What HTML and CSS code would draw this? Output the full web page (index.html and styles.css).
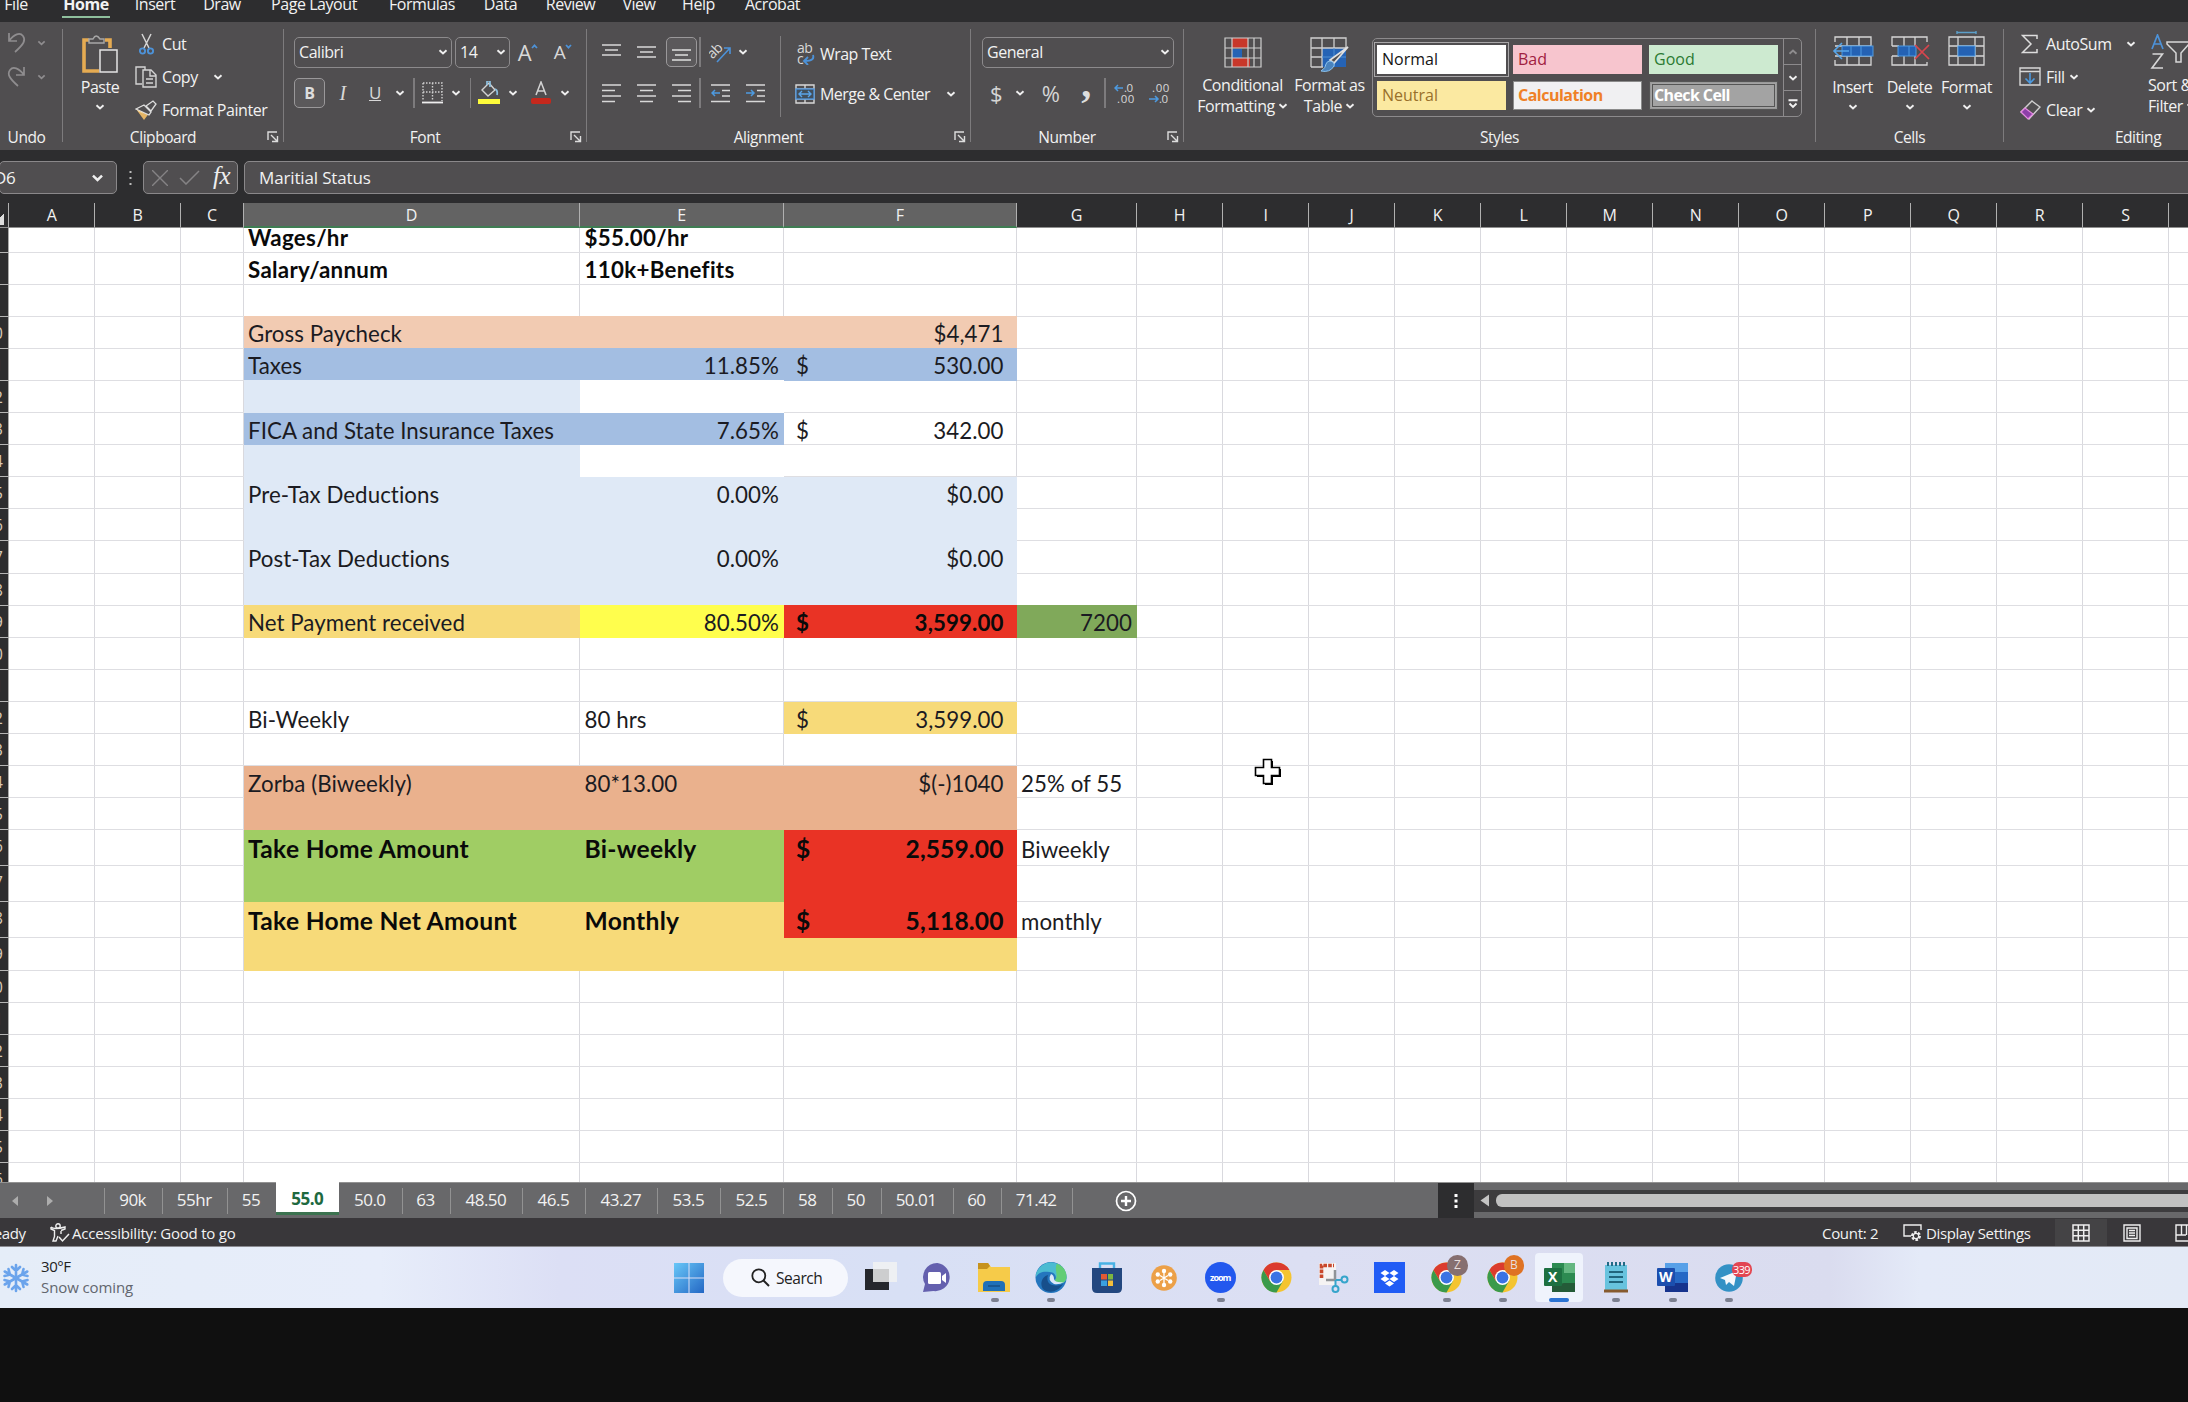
FILE: index.html
```html
<!DOCTYPE html>
<html lang="en">
<head>
<meta charset="utf-8">
<title>Paycheck workbook</title>
<link rel="stylesheet" href="styles.css">
</head>
<body>
<svg class="defs" width="0" height="0">
  <symbol id="chev" viewBox="0 0 10 6"><path d="M1.5 1.2 5 4.5 8.5 1.2" fill="none" stroke="currentColor" stroke-width="1.9"/></symbol>
  <symbol id="launch" viewBox="0 0 12 12"><path d="M1 9V1h9M4 4l6 6M10.5 5v5.5H5" fill="none" stroke="#ddd" stroke-width="1.4"/></symbol>
  <symbol id="chrome" viewBox="0 0 31 31">
    <circle cx="15.500" cy="15.500" r="15" fill="#f4c430"/>
    <path d="M2.500 8A15 15 0 0 0 15.500 30.500L22 19 15.500 15.500 9 19Z" fill="#3a9a4b"/>
    <path d="M15.500 8H28.500A15 15 0 0 0 2.500 8L9 19Z" fill="#db3b2e"/>
    <circle cx="15.500" cy="15.500" r="7.400" fill="#fff"/><circle cx="15.500" cy="15.500" r="5.900" fill="#3b73e4"/>
  </symbol>
</svg>
<main class="screen">
  <nav class="menu">
    <span class="m1">File</span><span class="m2 active">Home</span><span class="m3">Insert</span><span class="m4">Draw</span><span class="m5">Page Layout</span><span class="m6">Formulas</span><span class="m7">Data</span><span class="m8">Review</span><span class="m9">View</span><span class="m10">Help</span><span class="m11">Acrobat</span>
  </nav>

  <section class="ribbon">
    <div class="group g-undo">
      <div class="body undo-body">
        <div class="pair"><svg width="20" height="24" viewBox="0 0 20 24"><path d="M2 2v8h8M2 10C7 3 13 1 16 5s1 8-8 16" fill="none" stroke="#8f8d8f" stroke-width="1.700"/></svg><svg class="chev" width="9" height="6"><use href="#chev"/></svg></div>
        <div class="pair"><svg width="20" height="24" viewBox="0 0 20 24"><path d="M17 2v8H9M17 10C12 3 6 1 3 5s-1 8 8 16" fill="none" stroke="#8f8d8f" stroke-width="1.700"/></svg><svg class="chev" width="9" height="6"><use href="#chev"/></svg></div>
      </div>
      <div class="caption"><span>Undo</span></div>
    </div>
    <div class="group g-clip">
      <div class="body clip-body">
        <div class="big"><svg width="36" height="40" viewBox="0 0 36 40"><path d="M7 6H2v31h15M23 6h5v8" fill="none" stroke="#e5ab52" stroke-width="3.600"/><path d="M7 9V5h4q3-6 7 0h4v4z" fill="#504e50" stroke="#a7a7a7" stroke-width="1.400"/><rect x="18" y="16" width="17" height="22" fill="#504e50" stroke="#e4e4e4" stroke-width="1.500"/></svg><span>Paste</span><svg class="chev" width="10" height="6"><use href="#chev"/></svg></div>
        <div class="list">
          <div><i><svg width="15" height="22" viewBox="0 0 15 22"><path d="M3 1l7 14M12 1 5 15" stroke="#d6d6d6" stroke-width="1.500"/><circle cx="3.500" cy="18" r="2.600" fill="none" stroke="#4d92d8" stroke-width="1.900"/><circle cx="11.500" cy="18" r="2.600" fill="none" stroke="#4d92d8" stroke-width="1.900"/></svg></i>Cut</div>
          <div><i><svg width="22" height="22" viewBox="0 0 22 22"><path d="M7 18H1V1h9v3M8 4h8l5 5v12H8zM15 4v6h6M11 13h7M11 17h7" fill="none" stroke="#d3d3d3" stroke-width="1.400"/></svg></i>Copy<svg class="chev copychev" width="10" height="6"><use href="#chev"/></svg></div>
          <div><i><svg width="22" height="21" viewBox="0 0 22 21"><path d="M1 9l8-4 6 7-6 8z" fill="#e4b465"/><path d="M1 9 9 5l7 7-2 3z" fill="#504e50" stroke="#ddd" stroke-width="1.300"/><path d="M11 6l7-5 3 3-5 7z" fill="#504e50" stroke="#ddd" stroke-width="1.300"/><path d="M3 11l5 2" stroke="#f5d79c"/></svg></i>Format Painter</div>
        </div>
      </div>
      <div class="caption"><span>Clipboard</span><svg width="12" height="12"><use href="#launch"/></svg></div>
    </div>
    <div class="group g-font">
      <div class="body">
        <div class="row1 font1"><div class="combo">Calibri<svg class="chev" width="10" height="6"><use href="#chev"/></svg></div><div class="combo">14<svg class="chev" width="10" height="6"><use href="#chev"/></svg></div><span class="grow">A<svg width="7" height="5" viewBox="0 0 7 5"><path d="M1 4 3.500 1.300 6 4" fill="none" stroke="#4d92d8" stroke-width="1.700"/></svg></span><span class="shrink">A<svg width="7" height="5" viewBox="0 0 7 5"><path d="M1 1l2.500 2.700L6 1" fill="none" stroke="#4d92d8" stroke-width="1.700"/></svg></span></div>
        <div class="row2 font2"><b class="boxed">B</b><em class="serif">I</em><u>U</u><svg class="chev" width="10" height="6"><use href="#chev"/></svg><s></s>
          <svg width="21" height="22" viewBox="0 0 21 22"><path d="M1 1h19v18M1 1v18M10.500 1v18M1 10h19" fill="none" stroke="#d0d0d0" stroke-width="1.400" stroke-dasharray="1.500 1.500"/><path d="M0 20.500h21" stroke="#eee" stroke-width="1.800"/></svg>
          <svg class="chev" width="10" height="6"><use href="#chev"/></svg><s></s>
          <svg width="22" height="24" viewBox="0 0 22 24"><path d="M4 9l7-7 6 7-7 6z" fill="none" stroke="#d3d3d3" stroke-width="1.400"/><path d="M9 4V0h3v6M17 8q3 1 2 6" fill="none" stroke="#8dc0e0" stroke-width="1.700"/><rect x="0" y="18" width="22" height="5" fill="#fdfb3a"/></svg>
          <svg class="chev" width="10" height="6"><use href="#chev"/></svg>
          <svg width="22" height="24" viewBox="0 0 22 24"><path d="M6 14 11 1l5 13M8 10h6" fill="none" stroke="#d3d3d3" stroke-width="1.500"/><rect x="1" y="17" width="20" height="6" rx="2" fill="#c5281c"/></svg>
          <svg class="chev" width="10" height="6"><use href="#chev"/></svg></div>
      </div>
      <div class="caption"><span>Font</span><svg width="12" height="12"><use href="#launch"/></svg></div>
    </div>
    <div class="group g-align">
      <div class="body align-body">
        <div class="left">
          <div class="row1 al1">
            <svg width="19" height="18" viewBox="0 0 19 18"><path d="M0 2h19M3 7h13M0 12h19" stroke="#d8d8d8" stroke-width="1.500"/></svg>
            <svg width="19" height="18" viewBox="0 0 19 18"><path d="M0 4h19M3 9h13M0 14h19" stroke="#d8d8d8" stroke-width="1.500"/></svg>
            <b class="boxed low"><svg width="19" height="14" viewBox="0 0 19 14"><path d="M0 2h19M3 7h13M0 12h19" stroke="#e0e0e0" stroke-width="1.500"/></svg></b><s></s>
            <svg width="22" height="24" viewBox="0 0 22 24"><text x="-3" y="14" font-size="14" fill="#d8d8d8" transform="rotate(-45 7 9)">ab</text><path d="M8 22 21 8M15 8h6v6" fill="none" stroke="#4d92d8" stroke-width="1.600"/></svg>
            <svg class="chev start" width="10" height="6"><use href="#chev"/></svg>
          </div>
          <div class="row2 al2">
            <svg width="19" height="20" viewBox="0 0 19 20"><path d="M0 2h19M0 7.500h13M0 13h19M0 18.500h13" stroke="#d8d8d8" stroke-width="1.500"/></svg>
            <svg width="19" height="20" viewBox="0 0 19 20"><path d="M0 2h19M3 7.500h13M0 13h19M3 18.500h13" stroke="#d8d8d8" stroke-width="1.500"/></svg>
            <svg width="19" height="20" viewBox="0 0 19 20"><path d="M0 2h19M6 7.500h13M0 13h19M6 18.500h13" stroke="#d8d8d8" stroke-width="1.500"/></svg><s></s>
            <svg width="19" height="20" viewBox="0 0 19 20"><path d="M0 2h19M11 7.500h8M11 13h8M0 18.500h19" stroke="#d8d8d8" stroke-width="1.500"/><path d="M9 10H1M4 7l-3 3 3 3" fill="none" stroke="#4d9ae0" stroke-width="1.500"/></svg>
            <svg width="19" height="20" viewBox="0 0 19 20"><path d="M0 2h19M11 7.500h8M11 13h8M0 18.500h19" stroke="#d8d8d8" stroke-width="1.500"/><path d="M0 10h8M5 7l3 3-3 3" fill="none" stroke="#4d9ae0" stroke-width="1.500"/></svg>
          </div>
        </div>
        <div class="right">
          <div class="row1 wrap"><svg width="20" height="22" viewBox="0 0 20 22"><text x="2" y="10" font-size="14" fill="#d8d8d8">ab</text><text x="2" y="21" font-size="14" fill="#d8d8d8">c</text><path d="M18 12q2 6-8 6M13 14l-4 4 4 4" fill="none" stroke="#4d92d8" stroke-width="1.900"/></svg><span>Wrap Text</span></div>
          <div class="row2 wrap"><svg width="20" height="20" viewBox="0 0 20 20"><path d="M1 1h18v18H1zM1 5h18M1 15h18M10 1v4M10 15v4" fill="none" stroke="#d8d8d8" stroke-width="1.400"/><rect x="1" y="5" width="18" height="10" fill="#424f5c" stroke="#4d92d8" stroke-width="1.400"/><path d="M4 10h12M7 7l-3 3 3 3M13 7l3 3-3 3" fill="none" stroke="#5aa5ea" stroke-width="1.400"/></svg><span>Merge &amp; Center</span><svg class="chev" width="10" height="6"><use href="#chev"/></svg></div>
        </div>
      </div>
      <div class="caption"><span>Alignment</span><svg width="12" height="12"><use href="#launch"/></svg></div>
    </div>
    <div class="group g-num">
      <div class="body">
        <div class="row1 num1"><div class="combo">General<svg class="chev" width="10" height="6"><use href="#chev"/></svg></div></div>
        <div class="row2 num2"><span class="sym">$</span><svg class="chev" width="10" height="6"><use href="#chev"/></svg><span class="sym">%</span><span class="comma">,</span><s></s>
          <svg width="21" height="22" viewBox="0 0 21 22"><text x="10" y="9.500" font-size="11.500" fill="#d8d8d8">.0</text><text x="3" y="21" font-size="11.500" fill="#d8d8d8" textLength="17">.00</text><path d="M9 6H1M4 3 1 6l3 3" fill="none" stroke="#4d9ae0" stroke-width="1.500"/></svg>
          <svg width="21" height="22" viewBox="0 0 21 22"><text x="3" y="9.500" font-size="11.500" fill="#d8d8d8" textLength="17">.00</text><text x="10" y="21" font-size="11.500" fill="#d8d8d8">.0</text><path d="M0 17h9M6 14l3 3-3 3" fill="none" stroke="#4d9ae0" stroke-width="1.500"/></svg></div>
      </div>
      <div class="caption"><span>Number</span><svg width="12" height="12"><use href="#launch"/></svg></div>
    </div>
    <div class="group g-styles">
      <div class="body styles-body">
        <div class="big two"><svg width="38" height="36" viewBox="0 0 38 36"><rect x="8" y="1" width="16" height="10" fill="#c8372a"/><rect x="8" y="12" width="10" height="9" fill="#2563b5"/><rect x="8" y="21" width="18" height="9" fill="#c8372a"/><path d="M1 1h36v29H1zM8 1v29M24 1v29M30 1v29M1 11h36M1 21h36" fill="none" stroke="#cfcfcf" stroke-width="1.200"/></svg><span>Conditional</span><span>Formatting <svg class="chev" width="10" height="6"><use href="#chev"/></svg></span></div>
        <div class="big two"><svg width="40" height="36" viewBox="0 0 40 36"><rect x="12" y="11" width="24" height="19" fill="#2563b5"/><path d="M1 30V1h35v10M1 30h12M12 1v29M24 1v10M1 11h35M1 20h11" fill="none" stroke="#cfcfcf" stroke-width="1.300"/><path d="M24 11v19M12 20h24" stroke="#4f8fd2"/><path d="M38 10 24 26l-4-3z" fill="#504e50" stroke="#e0e0e0" stroke-width="1.700"/><path d="M20 24q5 1 4 5-4 7-13 5 5-3 5-7 1-3 4-3z" fill="#4a83bd" stroke="#8cc3ee"/></svg><span>Format as</span><span>Table <svg class="chev" width="10" height="6"><use href="#chev"/></svg></span></div>
        <div class="gallery">
          <div class="swatches">
            <span class="sw normal">Normal</span><span class="sw bad">Bad</span><span class="sw good">Good</span>
            <span class="sw neutral">Neutral</span><span class="sw calc">Calculation</span><span class="sw check">Check Cell</span>
          </div>
          <div class="spin"><span><svg width="10" height="6" viewBox="0 0 10 6"><path d="M1.500 4.800 5 1.500l3.500 3.300" fill="none" stroke="#8e8c8e" stroke-width="1.900"/></svg></span><span><svg class="chev" width="10" height="6"><use href="#chev"/></svg></span><span><svg width="10" height="10" viewBox="0 0 10 10"><path d="M.5 1.200h9M1.500 4.500 5 8l3.500-3.500" fill="none" stroke="#f2f2f2" stroke-width="1.900"/></svg></span></div>
        </div>
      </div>
      <div class="caption"><span>Styles</span></div>
    </div>
    <div class="group g-cells">
      <div class="body cells-body">
        <div class="big"><svg width="42" height="36" viewBox="0 0 42 36"><path d="M3 11V6h36v28H3v-5M15 6v28M27 6v28M3 15h36M3 25h36" fill="none" stroke="#d6d6d6" stroke-width="1.300"/><rect x="10" y="15" width="31" height="10" fill="#2462b4" stroke="#4f9ae0"/><path d="M19 15v10M29 15v10" stroke="#4f9ae0"/><path d="M17 20H2M10 12l-8 8 8 8" fill="none" stroke="#57a5e8" stroke-width="1.600"/></svg><span>Insert</span><svg class="chev" width="10" height="6"><use href="#chev"/></svg></div>
        <div class="big"><svg width="40" height="36" viewBox="0 0 40 36"><path d="M2 15V6h35v5M2 25v9h35v-3M14 6v9M25 6v9M14 25v9M25 25v9M2 15h7M2 25h7" fill="none" stroke="#d6d6d6" stroke-width="1.300"/><rect x="8" y="15" width="18" height="10" fill="#2462b4" stroke="#4f9ae0"/><path d="M19 15v10" stroke="#4f9ae0"/><path d="M25 14l14 14M39 14 25 28" stroke="#d9454d" stroke-width="1.700"/></svg><span>Delete</span><svg class="chev" width="10" height="6"><use href="#chev"/></svg></div>
        <div class="big"><svg width="38" height="36" viewBox="0 0 38 36"><path d="M1 6h35v28H1zM10 6v28M27 6v28M1 15h35M1 25h35" fill="none" stroke="#d6d6d6" stroke-width="1.300"/><rect x="10" y="15" width="17" height="10" fill="#2462b4" stroke="#4f9ae0"/><path d="M9 1.500h19M9 0v3M28 0v3" stroke="#5c9fc9" stroke-width="1.400"/></svg><span>Format</span><svg class="chev" width="10" height="6"><use href="#chev"/></svg></div>
      </div>
      <div class="caption"><span>Cells</span></div>
    </div>
    <div class="group g-edit">
      <div class="body edit-body">
        <div class="list">
          <div><i><svg width="18" height="20" viewBox="0 0 18 20"><path d="M16 5V1.500H1.500L10 10l-8.500 8.500H16V15" fill="none" stroke="#ddd" stroke-width="1.500"/></svg></i>AutoSum<svg class="chev sumchev" width="10" height="6"><use href="#chev"/></svg></div>
          <div><i><svg width="22" height="19" viewBox="0 0 22 19"><path d="M1 1h20v17H1zM1 4.500h20" fill="none" stroke="#d8d8d8" stroke-width="1.400"/><path d="M11 6v10M6.500 11.500 11 16l4.500-4.500" fill="none" stroke="#4d9ae0" stroke-width="1.600"/></svg></i>Fill<svg class="chev fillchev" width="10" height="6"><use href="#chev"/></svg></div>
          <div><i><svg width="21" height="20" viewBox="0 0 21 20"><path d="M1 12 12 1l8 6L9 19z" fill="none" stroke="#cfcfcf" stroke-width="1.400"/><path d="M1 12l4-4 8 6-5 5z" fill="#8d3fa8" stroke="#e58ae0" stroke-width="1.200"/></svg></i>Clear<svg class="chev fillchev" width="10" height="6"><use href="#chev"/></svg></div>
        </div>
        <div class="big two sort"><svg width="44" height="36" viewBox="0 0 44 36"><path d="M4 15 9.500 1 15 15M6 10h7" fill="none" stroke="#4d92d8" stroke-width="1.700"/><path d="M4.500 20h10L4 34h11" fill="none" stroke="#d8d8d8" stroke-width="1.600"/><path d="M19 8h22v2l-8 9v9h-5v-9l-9-9z" fill="none" stroke="#d8d8d8" stroke-width="1.500"/></svg><span>Sort &amp;</span><span>Filter <svg class="chev" width="10" height="6"><use href="#chev"/></svg></span></div>
      </div>
      <div class="caption"><span>Editing</span></div>
    </div>
  </section>

  <section class="formula">
    <div class="name">D6<svg class="chev" width="13" height="8"><use href="#chev"/></svg></div>
    <svg class="dots" width="3" height="16" viewBox="0 0 3 16"><path d="M1.500 1v14" stroke="#bbb" stroke-width="2" stroke-dasharray="2 4"/></svg>
    <div class="fx"><svg width="16" height="16" viewBox="0 0 16 16"><path d="M0 0l16 16M16 0 0 16" stroke="#858385" stroke-width="1.400"/></svg><svg width="21" height="15" viewBox="0 0 21 15"><path d="M1 8l6 6L20 1" fill="none" stroke="#858385" stroke-width="1.500"/></svg><em>fx</em></div>
    <div class="input">Maritial Status</div>
  </section>

  <section class="heads cols">
    <span class="corner"></span><span>A</span><span>B</span><span>C</span><span class="sel">D</span><span class="sel">E</span><span class="sel">F</span><span>G</span><span>H</span><span>I</span><span>J</span><span>K</span><span>L</span><span>M</span><span>N</span><span>O</span><span>P</span><span>Q</span><span>R</span><span>S</span><span></span>
  </section>

  <section class="sheet">
    <div class="r cols first"><i></i><b class="d">Wages/hr</b><b class="e">$55.00/hr</b></div>
    <div class="r cols"><i></i><b class="d">Salary/annum</b><b class="e">110k+Benefits</b></div>
    <div class="r cols"><i></i></div>
    <div class="r cols"><i>10</i><span class="d peach">Gross Paycheck</span><span class="e peach"></span><span class="f peach">$4,471</span></div>
    <div class="r cols"><i>11</i><span class="d blue">Taxes</span><span class="e num blue">11.85%</span><span class="f blue"><q>$</q>530.00</span></div>
    <div class="r cols"><i>12</i><span class="d pale"></span><span class="e white"></span></div>
    <div class="r cols"><i>13</i><span class="d blue">FICA and State Insurance Taxes</span><span class="e num blue">7.65%</span><span class="f"><q>$</q>342.00</span></div>
    <div class="r cols"><i>14</i><span class="d pale"></span><span class="e white"></span></div>
    <div class="r cols"><i>15</i><span class="d pale">Pre-Tax Deductions</span><span class="e num pale">0.00%</span><span class="f pale">$0.00</span></div>
    <div class="r cols"><i>16</i><span class="d pale"></span><span class="e pale"></span><span class="f pale"></span></div>
    <div class="r cols"><i>17</i><span class="d pale">Post-Tax Deductions</span><span class="e num pale">0.00%</span><span class="f pale">$0.00</span></div>
    <div class="r cols"><i>18</i><span class="d pale"></span><span class="e pale"></span><span class="f pale"></span></div>
    <div class="r cols"><i>19</i><span class="d gold">Net Payment received</span><span class="e num yellow">80.50%</span><b class="f red"><q>$</q>3,599.00</b><span class="g num olive">7200</span></div>
    <div class="r cols"><i>20</i></div>
    <div class="r cols"><i>21</i></div>
    <div class="r cols"><i>22</i><span class="d">Bi-Weekly</span><span class="e">80 hrs</span><span class="f gold"><q>$</q>3,599.00</span></div>
    <div class="r cols"><i>23</i></div>
    <div class="r cols"><i>24</i><span class="d salmon">Zorba (Biweekly)</span><span class="e salmon">80*13.00</span><span class="f salmon">$(-)1040</span><span class="g">25% of 55</span></div>
    <div class="r cols"><i>25</i><span class="d salmon"></span><span class="e salmon"></span><span class="f salmon"></span></div>
    <div class="r cols tall"><i>26</i><b class="d green">Take Home Amount</b><b class="e green">Bi-weekly</b><b class="f red"><q>$</q>2,559.00</b><span class="g">Biweekly</span></div>
    <div class="r cols tall"><i>27</i><span class="d green"></span><span class="e green"></span><span class="f red"></span></div>
    <div class="r cols tall"><i>28</i><b class="d gold">Take Home Net Amount</b><b class="e gold">Monthly</b><b class="f red"><q>$</q>5,118.00</b><span class="g">monthly</span></div>
    <div class="r cols"><i>29</i><span class="d gold"></span><span class="e gold"></span><span class="f gold"></span></div>
    <div class="r cols"><i>30</i></div>
    <div class="r cols"><i>31</i></div>
    <div class="r cols"><i>32</i></div>
    <div class="r cols"><i>33</i></div>
    <div class="r cols"><i>34</i></div>
    <div class="r cols"><i>35</i></div>
    <div class="r cols"><i>36</i></div>
    <svg class="cursor" width="30" height="30" viewBox="0 0 30 30"><path d="M12 3h8v8h8v8h-8v8h-8v-8H4v-8h8z" fill="#000"/><path d="M10.500 1.500h8v8h8v8h-8v8h-8v-8h-8v-8h8z" fill="#fff" stroke="#000" stroke-width="1.600"/></svg>
  </section>

  <section class="tabs">
    <div class="arrows"><svg width="6" height="10" viewBox="0 0 6 10"><path d="M6 0v10L0 5z" fill="#adadad"/></svg><svg width="6" height="10" viewBox="0 0 6 10"><path d="M0 0v10l6-5z" fill="#adadad"/></svg></div>
    <span class="t58">90k</span><span class="t65">55hr</span><span class="t48">55</span><span class="t63 on">55.0</span><span class="t63">50.0</span><span class="t48">63</span><span class="t72">48.50</span><span class="t63">46.5</span><span class="t72">43.27</span><span class="t63">53.5</span><span class="t63">52.5</span><span class="t48">58</span><span class="t48">50</span><span class="t72">50.01</span><span class="t48">60</span><span class="t72 last">71.42</span>
    <svg class="plus" width="22" height="22" viewBox="0 0 22 22"><circle cx="11" cy="11" r="9.500" fill="none" stroke="#fff" stroke-width="1.700"/><path d="M11 6v10M6 11h10" stroke="#fff" stroke-width="2.400"/></svg>
    <div class="grip"><svg width="4" height="16" viewBox="0 0 4 16"><path d="M2 1v14" stroke="#fff" stroke-width="3" stroke-dasharray="3 2.500"/></svg></div>
    <div class="track"><svg width="10" height="13" viewBox="0 0 10 13"><path d="M9 .5v12L.5 6.500z" fill="#c4c4c4"/></svg><div class="thumb"></div></div>
  </section>

  <section class="status">
    <span class="ready">Ready</span>
    <svg width="20" height="20" viewBox="0 0 20 20"><circle cx="8" cy="3" r="2.200" fill="none" stroke="#eee" stroke-width="1.400"/><path d="M1 4q3 3 14 0v2l-4 1.500M1 4v2l3.500 1.500v6L3 18h3l2-5M11 8v3" fill="none" stroke="#eee" stroke-width="1.400"/><path d="M9 14l3.500 4L19 11" fill="none" stroke="#eee" stroke-width="1.500"/></svg>
    <span class="acc">Accessibility: Good to go</span>
    <span class="count">Count: 2</span>
    <svg class="disp" width="20" height="18" viewBox="0 0 20 18"><path d="M8 12H1V1h17v5" fill="none" stroke="#eee" stroke-width="1.400"/><circle cx="13" cy="12" r="3.700" fill="none" stroke="#eee" stroke-width="2.600" stroke-dasharray="2.400 1.400"/><circle cx="13" cy="12" r="2.700" fill="none" stroke="#eee" stroke-width="1.200"/></svg>
    <span class="set">Display Settings</span>
    <div class="views"><div class="hot"><svg width="18" height="18" viewBox="0 0 18 18"><path d="M1 1h16v16H1zM6.300 1v16M11.700 1v16M1 6.300h16M1 11.700h16" fill="none" stroke="#eee" stroke-width="1.500"/></svg></div><div><svg width="18" height="18" viewBox="0 0 18 18"><path d="M1 1h16v16H1zM4 4h10v10.500H4zM6 6.500h6M6 9h6M6 11.500h6" fill="none" stroke="#eee" stroke-width="1.400"/></svg></div><div><svg width="18" height="18" viewBox="0 0 18 18"><path d="M1 1h16v16H1zM6.500 1v10M11.500 1v10M1 11h10" fill="none" stroke="#eee" stroke-width="1.400"/></svg></div></div>
  </section>

  <section class="taskbar">
    <svg class="snow" width="30" height="30" viewBox="0 0 30 30"><g fill="none" stroke="#6ba4ec" stroke-width="2.600" stroke-linecap="round"><path id="arm" d="M15 15V2M11 4l4 4 4-4"/><use href="#arm" transform="rotate(60 15 15)"/><use href="#arm" transform="rotate(120 15 15)"/><use href="#arm" transform="rotate(180 15 15)"/><use href="#arm" transform="rotate(240 15 15)"/><use href="#arm" transform="rotate(300 15 15)"/></g></svg>
    <div class="weather"><span>30°F</span><small>Snow coming</small></div>
    <svg class="win" width="30" height="30" viewBox="0 0 30 30"><defs><linearGradient id="wg" x2="1" y2="1"><stop stop-color="#68c7f8"/><stop offset="1" stop-color="#2467c4"/></linearGradient></defs><path d="M0 0h14.500v14.500H0zM15.500 0H30v14.500H15.500zM0 15.500h14.500V30H0zM15.500 15.500H30V30H15.500z" fill="url(#wg)"/></svg>
    <div class="search"><svg width="19" height="19" viewBox="0 0 19 19"><circle cx="7.800" cy="7.800" r="6.500" fill="none" stroke="#222" stroke-width="1.800"/><path d="M12.500 12.500 18 18" stroke="#222" stroke-width="2"/></svg><span>Search</span></div>
    <div class="apps">
      <div><svg width="32" height="31" viewBox="0 0 32 31"><path d="M0 7h24v21H0z" fill="#25272c"/><path d="M8 0h24v20H8z" fill="#f3f3f3" opacity=".82"/></svg></div>
      <div><svg width="31" height="31" viewBox="0 0 31 31"><path d="M15.500 1a14 14 0 1 1-4 28L1 30l2-8A14 14 0 0 1 15.500 1z" fill="#6460ae"/><rect x="6" y="10" width="13" height="12" rx="1.500" fill="#fff"/><path d="m20 14 4-3v10l-4-3z" fill="#fff"/></svg></div>
      <div class="run"><svg width="32" height="31" viewBox="0 0 32 31"><path d="M0 1h10l3 4h19v25H0z" fill="#f6cb49"/><path d="M0 1h10l2 3-3 3H0z" fill="#c6921d"/><path d="M5 29v-6q0-4 4-4h14q4 0 4 4v6z" fill="#1f70b8"/><path d="M10 24h12" stroke="#174f86" stroke-width="1.500"/></svg></div>
      <div class="run"><svg width="32" height="31" viewBox="0 0 32 31"><circle cx="16" cy="15.500" r="15.500" fill="#2476be"/><path d="M1 12A15.500 15.500 0 0 1 31.500 15c0 7-9 8-12 4 3-3 1-9-5-9-6-1-11 0-13.500 5z" fill="#4bbbd1"/><path d="M22 1.500c7 3 9.500 8 9.500 13.500 0 7-9 8-12 4 5-6-1-11 2.500-17.500z" fill="#63cd76"/><path d="M13 13c-3 9 5 13 15 9-5 8-14 10-20 5-4-6 0-13 5-14z" fill="#174f8b"/><path d="M16 12q-4 6 3 10 5 1 10-2-9 1-10-3 0-4-3-5z" fill="#dce7fa"/></svg></div>
      <div><svg width="30" height="31" viewBox="0 0 30 31"><path d="M8 7V1.500h14V7" fill="none" stroke="#48b2e5" stroke-width="2.400"/><path d="M0 6h30v20q0 5-5 5H5q-5 0-5-5z" fill="#23477f"/><path d="M9 12h6v5.500H9z" fill="#e35a35"/><path d="M16 12h5v5.500h-5z" fill="#7cb641"/><path d="M9 18.500h6V24H9z" fill="#3aa0df"/><path d="M16 18.500h5V24h-5z" fill="#f3bd3b"/></svg></div>
      <div><svg width="26" height="26" viewBox="0 0 26 26"><circle cx="13" cy="13" r="12.800" fill="#eca048"/><g fill="#fff"><circle cx="13" cy="6" r="2.200"/><circle cx="13" cy="20" r="2.200"/><circle cx="6.800" cy="9.500" r="2.200"/><circle cx="19.200" cy="9.500" r="2.200"/><circle cx="6.800" cy="16.500" r="2.200"/><circle cx="19.200" cy="16.500" r="2.200"/></g><path d="M13 8v10M9 10.500l8 5M17 10.500l-8 5" stroke="#fff" stroke-width="1.300"/></svg></div>
      <div class="run"><svg width="31" height="31" viewBox="0 0 31 31"><circle cx="15.500" cy="15.500" r="15.500" fill="#2258ee"/><text x="5" y="18.500" font-size="9" font-weight="700" fill="#fff" textLength="21">zoom</text></svg></div>
      <div><svg width="31" height="31"><use href="#chrome"/></svg></div>
      <div><svg width="31" height="31" viewBox="0 0 31 31"><path d="M1 1h17v22H1z" fill="#f5f3f3"/><path d="M3.500 16V3.500H16" fill="none" stroke="#c9472b" stroke-width="3.600" stroke-dasharray="3.600 1.200"/><path d="M17 8v11M8 18h10" fill="none" stroke="#909397" stroke-width="2.500"/><circle cx="26.500" cy="17.500" r="3" fill="none" stroke="#36a5cb" stroke-width="2"/><circle cx="17.500" cy="27" r="3" fill="none" stroke="#36a5cb" stroke-width="2"/><path d="M18 18h6M17.500 18v6" stroke="#36a5cb" stroke-width="2"/></svg></div>
      <div><svg width="31" height="31" viewBox="0 0 31 31"><path d="M0 0h31v31H0z" fill="#215cf5"/><path d="m11 8 4.500 3-4.500 3-4.500-3zM20 8l4.500 3-4.500 3-4.500-3zM11 14l4.500 3-4.500 3-4.500-3zM20 14l4.500 3-4.500 3-4.500-3zM15.500 18.500l4.500 3-4.500 3-4.500-3z" fill="#fff"/></svg></div>
      <div class="run"><svg width="31" height="31"><use href="#chrome"/></svg><em class="badge z">Z</em></div>
      <div class="run"><svg width="31" height="31"><use href="#chrome"/></svg><em class="badge b">B</em></div>
      <div class="run current"><svg width="31" height="29" viewBox="0 0 31 29"><path d="M8 0h23v29H8z" fill="#2c8a51"/><path d="M20 0h11v10H20z" fill="#64b781"/><path d="M20 20h11v9H8v-6z" fill="#245b38"/><rect y="5" width="18" height="18" rx="1" fill="#1d7041"/><text x="4" y="19" font-size="14" font-weight="700" fill="#fff">X</text></svg></div>
      <div class="run"><svg width="24" height="31" viewBox="0 0 24 31"><path d="M1 3h22v25H1z" fill="#68c3de"/><path d="M4 0v4M8 0v4M12 0v4M16 0v4M20 0v4" stroke="#226b86" stroke-width="2"/><path d="M5 10h14M5 15h14M5 20h14" stroke="#20657d" stroke-width="1.800"/><path d="M0 29h24" stroke="#875a2e" stroke-width="3"/></svg></div>
      <div class="run"><svg width="31" height="29" viewBox="0 0 31 29"><path d="M8 0h23v29H8z" fill="#2668c5"/><path d="M8 0h23v9H8z" fill="#57a0e8"/><path d="M8 20h23v9H8z" fill="#16338d"/><rect y="5" width="18" height="18" rx="1" fill="#1b4eae"/><text x="2" y="19" font-size="14" font-weight="700" fill="#fff">W</text></svg></div>
      <div class="run"><svg width="28" height="28" viewBox="0 0 28 28"><circle cx="14" cy="14" r="13.800" fill="#3391c5"/><path d="m5 14 17-7-3 15-5-4-3 3-1-5z" fill="#f4f8fc"/></svg><em class="badge t">339</em></div>
    </div>
  </section>
</main>
</body>
</html>
```
FILE: styles.css
```css
* { box-sizing: border-box; }
body { margin: 0; background: #101010; }
.defs { position: absolute; }
svg { display: block; flex: none; }
.screen {
  width: 2188px; height: 1402px; overflow: hidden; display: flex; flex-direction: column;
  background: #101010; color: #f2f2f2;
  font: 16px/20px "Open Sans", "Noto Sans", sans-serif; letter-spacing: -.45px;
}
.screen > * { flex: none; }
.chev { color: #efefef; }

/* menu tabs, cut by the top edge */
.menu { height: 22px; background: #2d2d2f; display: flex; align-items: flex-start; }
.menu span { height: 18px; line-height: 22px; display: flex; align-items: flex-end; justify-content: center; white-space: nowrap; padding-bottom: 3.500px; }
.menu .m1 { margin-left: 3px; width: 26px; }
.menu .m2 { margin-left: 33px; width: 48px; }
.menu .m3 { margin-left: 24px; width: 42px; }
.menu .m4 { margin-left: 26px; width: 40px; }
.menu .m5 { margin-left: 26px; width: 92px; }
.menu .m6 { margin-left: 28px; width: 68px; }
.menu .m7 { margin-left: 27px; width: 35px; }
.menu .m8 { margin-left: 26px; width: 53px; }
.menu .m9 { margin-left: 24px; width: 36px; }
.menu .m10 { margin-left: 24px; width: 35px; }
.menu .m11 { margin-left: 26px; width: 61px; }
.menu .active { font-weight: 700; border-bottom: 2.500px solid #8fbf9d; padding-bottom: 1.500px; }

/* ribbon */
.ribbon { height: 128px; background: #504e50; display: flex; padding-top: 7px; }
.group { height: 113px; border-right: 1.500px solid #7d7b7d; display: flex; flex-direction: column; flex: none; }
.body { height: 99px; flex: none; }
.caption { height: 20px; margin-top: -1px; display: flex; align-items: center; font-size: 15.500px; text-align: center; }
.caption span { flex: 1; }
.caption svg { margin-right: 4px; margin-left: 4px; }
.g-undo { width: 63px; } .g-clip { width: 221px; } .g-font { width: 303px; } .g-align { width: 384px; }
.g-num { width: 213px; } .g-styles { width: 632px; } .g-cells { width: 188px; } .g-edit { width: 268px; border: 0; }
.g-undo .caption { padding-right: 9px; }
.undo-body { padding: 2px 0 0 7px; display: flex; flex-direction: column; gap: 10px; }
.pair { display: flex; align-items: center; gap: 10px; }
.pair .chev { color: #8f8d8f; }

.big { display: flex; flex-direction: column; align-items: center; white-space: nowrap; }
.big > span { height: 20px; }
.clip-body { display: flex; padding-left: 15px; }
.clip-body .big { width: 44px; padding-top: 5px; }
.clip-body .big > span { margin-top: 3px; }
.big > .chev { margin-top: 7px; }
.list > div { height: 33.300px; display: flex; align-items: center; white-space: nowrap; }
.list i { width: 28px; display: flex; justify-content: center; padding-right: 4px; }
.clip-body .list { margin-left: 12px; margin-top: -2px; }
.copychev { margin-left: 15px; }

.row1 { height: 46px; display: grid; align-items: center; }
.row2 { height: 36px; display: grid; align-items: center; }
.row1 > *, .row2 > * { justify-self: center; }
.combo { height: 31px; width: 100%; border: 1.500px solid #8c8a8c; border-radius: 5px; display: flex; align-items: center; justify-content: space-between; padding: 0 3px 0 4px; }
.boxed { width: 31px; height: 30px; border: 1.500px solid #9a989a; border-radius: 5px; display: flex; align-items: center; justify-content: center; background: #5b595b; }
.row1 s, .row2 s { width: 1.500px; height: 30px; background: #7d7b7d; }
.font1 { grid-template-columns: 158px 3px 55px 36px 34px; margin-left: 10px; }
.font1 > :nth-child(2) { grid-column: 3; }
.grow, .shrink { color: #d8d8d8; font-size: 22px; line-height: 24px; display: flex; }
.shrink { font-size: 19px; }
.grow svg, .shrink svg { margin-top: 4px; }
.font2 { grid-template-columns: 31px 35px 30px 19px 10px 26px 22px 7px 29px 19px 38px 10px; margin-left: 10px; }
.font2 b { color: #ddd; } .serif { font-family: "Liberation Serif", serif; font-size: 20px; color: #d8d8d8; } .font2 u { color: #d8d8d8; font-size: 17px; }
.align-body { display: flex; }
.align-body .left { width: 193px; }
.al1, .al2 { grid-template-columns: 35px 35px 35px 2px 38px 33px; margin-left: 7px; }
.start { justify-self: start !important; margin-left: -1px; }
.low { align-items: flex-end; padding-bottom: 4px; }
.align-body .right { flex: 1; margin-top: 7px; height: 81px; border-left: 1.500px solid #7d7b7d; padding-left: 14px; }
.right .row1 { height: 36px; margin-bottom: 4px; }
.right .wrap { display: flex; align-items: center; gap: 5px; white-space: nowrap; }
.wrap span { letter-spacing: -.55px; }
.wrap .chev { margin-left: 11px; }
.num1 { padding: 0 9px 0 11px; }
.num2 { grid-template-columns: 28px 20px 41px 30px 8px 31px 38px; margin-left: 11px; }
.sym { font-size: 22px; color: #d5d5d5; line-height: 24px; }
.comma { font: 700 40px/20px "Liberation Serif", serif; color: #ddd; margin-top: -18px; }

.styles-body { display: flex; }
.two { padding-top: 8px; }
.two > span { height: 20.500px; display: flex; align-items: center; gap: 3px; }
.two > svg + span { margin-top: 2px; }
.styles-body .two { width: 87px; margin-left: 15px; }
.styles-body .two + .two { margin-left: 0; }
.gallery { margin-top: 9px; width: 430px; height: 79px; border: 1.500px solid #8c8a8c; border-radius: 5px; display: flex; margin-left: -1px; }
.swatches { width: 411px; display: grid; grid-template-columns: 129px 129px 129px; column-gap: 7px; grid-auto-rows: 28.500px; row-gap: 7.500px; padding: 6px 0 0 4px; }
.sw { padding-left: 5px; line-height: 28px; letter-spacing: 0; }
.normal { background: #fff; color: #151515; outline: 1.500px solid #a9a7a9; outline-offset: 2px; }
.bad { background: #f7c5ce; color: #a02040; }
.good { background: #cdead0; color: #2b7a32; }
.neutral { background: #fbe9a1; color: #99702a; }
.calc { background: #f0f0f2; color: #ef8126; font-weight: 700; border: 1px solid #8b8b8b; letter-spacing: -.5px; line-height: 26px; padding-left: 4px; }
.check { background: #a3a3a3; color: #fff; font-weight: 700; border: 4px double #555; outline: 1px solid #999; outline-offset: -2px; padding-left: 1px; line-height: 20px; letter-spacing: -.6px; }
.spin { width: 18px; border-left: 1.500px solid #8c8a8c; display: flex; flex-direction: column; }
.spin span { flex: 1; display: flex; align-items: center; justify-content: center; }
.spin span + span { border-top: 1.500px solid #8c8a8c; }
.cells-body { display: flex; padding: 2px 0 0 8px; }
.cells-body .big { width: 57px; }
.cells-body .big > span { margin-top: 10px; }
.edit-body { display: flex; }
.edit-body .list { width: 134px; padding-left: 12px; margin-top: -2px; }
.edit-body .list i { width: 30px; padding-right: 2px; }
.sumchev { margin-left: 14px; } .fillchev { margin-left: 4px; }
.sort { padding-top: 5px; margin-left: 10px; width: 50px; align-items: flex-start; }
.sort > svg + span { margin-top: 5px; }

/* formula bar */
.formula { height: 53px; background: #2d2d2f; padding-top: 11px; display: flex; font-size: 17px; align-items: flex-start; }
.formula > div { height: 33px; background: #504e50; border: 1.500px solid #8a888a; border-radius: 5px; display: flex; align-items: center; flex: none; }
.formula .name { width: 118px; margin-left: -1px; justify-content: space-between; padding: 0 12px 0 0; text-indent: -6px; }
.dots { margin: 9px 11px 0 12px; }
.formula .fx { width: 95px; padding-left: 8px; gap: 11px; }
.fx em { font: italic 25px/24px "Liberation Serif", serif; margin-left: 2px; color: #eee; margin-top: -4px; }
.formula .input { margin-left: 6px; width: 1960px; padding-left: 14px; letter-spacing: -.15px; }

/* spreadsheet */
.cols { display: grid; grid-template-columns: 9px 86px 86px 62.500px 336.500px 204px 232.500px 120.500px repeat(12, 86px) 30px; }
.heads { height: 25px; background: #2d2d2f; }
.heads span { border-right: 1.500px solid #b0b0b0; border-bottom: 1.500px solid #8f8f8f; display: flex; align-items: center; justify-content: center; font-size: 16px; }
.heads .sel { background: #636363; border-bottom: 2px solid #3f7d53; }
.heads .corner { background: linear-gradient(135deg, #2d2d2f 30%, #ddd 30%) no-repeat 0 9px / 4px 13px; }
.sheet {
  height: 954px; overflow: hidden; position: relative; color: #1b1b22;
  font: 22.300px/26px Lato, "Liberation Sans", sans-serif; letter-spacing: .05px; font-variant-ligatures: none;
  --l: linear-gradient(#d9d9de, #d9d9de);
  background: var(--l) 94px 0/1px 100%, var(--l) 180px 0/1px 100%, var(--l) 243px 0/1px 100%, var(--l) 579px 0/1px 100%, var(--l) 783px 0/1px 100%, var(--l) 1016px 0/1px 100%, repeating-linear-gradient(90deg, #d9d9de 0 1px, transparent 1px 86px) 1136px 0/1100px 100%, #fff;
  background-repeat: no-repeat;
}
.r { height: 32.110px; border-bottom: 1.500px solid #dedee2; }
.r.first { height: 24.500px; }
.r.tall { height: 36px; }
.r > i { grid-column: 1; width: 9px; height: calc(100% + 1px); background: #2d2d2f; border-right: 1px solid #aaa; border-bottom: 1.500px solid #b5b5b5; font: 16px/32px "Open Sans", sans-serif; color: #d8c8b8; direction: rtl; overflow: hidden; padding-right: 5px; white-space: nowrap; }
.r > span, .r > b { height: calc(100% + 1.500px); margin-top: -.5px; padding: 5px 5px 0 4.500px; white-space: nowrap; grid-row: 1; position: relative; }
.r.first > b { padding-top: 0; margin-top: -3px; }
.r b { color: #0a0a0a; font-weight: 700; letter-spacing: .3px; }
.r > b.f { letter-spacing: .1px; }
.r.tall > b { font-size: 24.600px; padding-top: 6px; letter-spacing: .3px; }
.r.tall > b.f { letter-spacing: .1px; }
.r.tall > span { padding-top: 7px; }
.d { grid-column: 5; } .e { grid-column: 6; } .f { grid-column: 7; } .g { grid-column: 8; }
.r > .f { text-align: right; padding-right: 13px; padding-left: 12px; }
.r > .num { text-align: right; }
q { quotes: none; float: left; }
.peach { background: #f2cbb2; } .blue { background: #a3bee2; } .pale { background: #dfe9f6; } .white { background: #fff; }
.gold { background: #f7da79; } .yellow { background: #fffe4d; } .red { background: #e93325; } .olive { background: #80a95a; }
.salmon { background: #eab18d; } .green { background: #a0cd64; }
.cursor { position: absolute; left: 1253px; top: 530px; }

/* worksheet tabs */
.tabs { height: 36px; background: #68686a; border-top: 1.500px solid #929292; display: flex; align-items: center; font-size: 17px; }
.arrows { width: 104px; padding-left: 12px; display: flex; gap: 29px; }
.tabs > span { height: 26px; border-left: 1.500px solid #929292; display: flex; align-items: center; justify-content: center; letter-spacing: -.5px; padding: 0 2px 2px 0; }
.tabs > .on { align-self: flex-start; margin-top: -1px; height: 33px; background: #fff; color: #20693f; font-weight: 700; border-left: 0; border-bottom: 3.500px solid #3c7350; padding: 3px 0 0; }
.tabs .on + span { border-left-color: transparent; }
.tabs > .last { border-right: 1.500px solid #929292; }
.t58 { width: 58.200px; } .t65 { width: 65px; } .t48 { width: 48.600px; } .t63 { width: 63px; } .t72 { width: 72px; }
.tabs .plus { margin-left: 42px; }
.grip { height: 36px; width: 36.500px; background: #2d2d2f; margin-left: auto; display: flex; align-items: center; justify-content: center; }
.track { width: 714px; height: 22px; background: #3d3c3e; display: flex; align-items: center; gap: 6px; padding-left: 6px; }
.thumb { flex: 1; height: 12.500px; background: #c1c1c1; border-radius: 6px 0 0 6px; }

.status { height: 29px; background: #39373a; border-bottom: 1.500px solid #8a8a90; display: flex; align-items: center; font-size: 15px; white-space: nowrap; padding-top: 1px; }
.ready { width: 35px; margin-left: -15px; margin-right: 30px; }
.acc { margin-left: 2px; letter-spacing: -.22px; }
.count { margin-left: auto; width: 81px; letter-spacing: -.3px; }
.disp { margin-right: 3px; }
.set { width: 129px; letter-spacing: -.35px; }
.views { display: flex; width: 133px; overflow: hidden; }
.views div { width: 51.500px; height: 27px; flex: none; display: flex; align-items: center; justify-content: center; }
.views .hot { background: #444345; }

/* taskbar */
.taskbar { height: 61px; display: flex; align-items: center; color: #222; background: linear-gradient(90deg, #e5edf8 0, #e7edfa 380px, #dcdff5 560px, #d8e0f5 900px, #dcdff3 1300px, #dadcef 1830px, #e4eaf8 1920px, #e3eaf6 100%); }
.snow { margin-left: 1px; }
.weather { margin-left: 10px; width: 633px; display: flex; flex-direction: column; font-size: 15px; line-height: 21px; padding-bottom: 2px; }
.weather small { font-size: 15px; color: #62666e; letter-spacing: -.1px; }
.search { margin-left: 19px; width: 125px; height: 38px; border-radius: 19px; background: #f5f7fd; display: flex; align-items: center; gap: 6px; padding-left: 28px; font-size: 15.500px; }
.apps { margin-left: 5px; display: flex; height: 61px; }
.apps > div { width: 56.500px; height: 61px; display: flex; align-items: center; justify-content: center; position: relative; }
.run::after { content: ""; position: absolute; bottom: 6px; left: 24.500px; width: 8px; height: 4px; border-radius: 2px; background: #7c8090; }
.apps .current::before { content: ""; position: absolute; left: 4px; top: 6px; width: 48px; height: 49px; border-radius: 4px; background: #eff3fc; }
.current svg { position: relative; }
.apps .current::after { left: 18px; width: 20px; background: #2b73d3; }
.badge { position: absolute; font-style: normal; color: #e9dedd; width: 20.500px; height: 20.500px; border-radius: 50%; left: 29px; top: 8px; font-size: 12px; line-height: 20px; text-align: center; }
.z { background: #866f70; } .b { background: #df7223; }
.t { background: #e24552; width: 20px; height: 15px; border-radius: 7px; left: 31px; top: 15px; font-size: 11px; line-height: 15px; letter-spacing: -.6px; color: #fff; }
```
